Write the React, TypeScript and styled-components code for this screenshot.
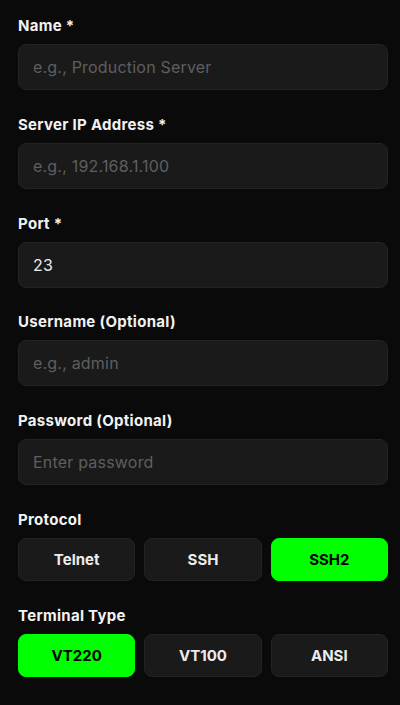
import React, { useState } from "react";
import styled, { createGlobalStyle } from "styled-components";

const PROTOCOLS = ["Telnet", "SSH", "SSH2"];
const TERMINALS = ["VT220", "VT100", "ANSI"];

const FIELDS = [
  { label: "Name *", placeholder: "e.g., Production Server", value: "" },
  { label: "Server IP Address *", placeholder: "e.g., 192.168.1.100", value: "" },
  { label: "Port *", placeholder: "", value: "23" },
  { label: "Username (Optional)", placeholder: "e.g., admin", value: "" },
  { label: "Password (Optional)", placeholder: "Enter password", value: "", type: "password" },
];

const App = () => {
  const [protocol, setProtocol] = useState("SSH2");
  const [terminal, setTerminal] = useState("VT220");
  return (
    <>
      <GlobalStyle />
      <Form>
        {FIELDS.map((field) => (
          <Field key={field.label}>
            <Label>{field.label}</Label>
            <Input
              type={field.type || "text"}
              placeholder={field.placeholder}
              defaultValue={field.value}
            />
          </Field>
        ))}
        <Field>
          <Label>Protocol</Label>
          <Options>
            {PROTOCOLS.map((p) => (
              <Option key={p} $active={p === protocol} onClick={() => setProtocol(p)}>
                {p}
              </Option>
            ))}
          </Options>
        </Field>
        <Field>
          <Label>Terminal Type</Label>
          <Options>
            {TERMINALS.map((t) => (
              <Option key={t} $active={t === terminal} onClick={() => setTerminal(t)}>
                {t}
              </Option>
            ))}
          </Options>
        </Field>
      </Form>
    </>
  );
};

const GlobalStyle = createGlobalStyle`
  body {
    margin: 0;
    background: #0a0a0a;
    font-family: Inter, Roboto, "Liberation Sans", sans-serif;
  }
`;

const Form = styled.div`
  display: flex;
  flex-direction: column;
  gap: 24.75px;
  padding: 16px 12px 0 18px;
  height: 705px;
  box-sizing: border-box;
  background: #0a0a0a;
`;

const Field = styled.div`
  display: flex;
  flex-direction: column;
  gap: 8px;
`;

const Label = styled.div`
  color: #f2f2f2;
  font-size: 15px;
  font-weight: 700;
  line-height: 20px;
  letter-spacing: 0.3px;
`;

const Input = styled.input`
  height: 46px;
  box-sizing: border-box;
  padding: 0 14px;
  background: #1a1a1a;
  border: 1px solid #232323;
  border-radius: 8px;
  color: #ececec;
  font-family: Inter, Roboto, "Liberation Sans", sans-serif;
  font-size: 16px;
  letter-spacing: 0.2px;
  outline: none;
  &::placeholder {
    color: #5f5f5f;
  }
`;

const Options = styled.div`
  display: grid;
  grid-template-columns: repeat(3, 1fr);
  gap: 9px;
`;

const Option = styled.button<{ $active: boolean }>`
  height: 43px;
  border-radius: 8px;
  border: 1px solid ${(p) => (p.$active ? "#00ff00" : "#232323")};
  background: ${(p) => (p.$active ? "#00ff00" : "#1a1a1a")};
  color: ${(p) => (p.$active ? "#000" : "#ececec")};
  font-family: Inter, Roboto, "Liberation Sans", sans-serif;
  font-size: 15px;
  font-weight: 700;
  cursor: pointer;
`;

export default App;
